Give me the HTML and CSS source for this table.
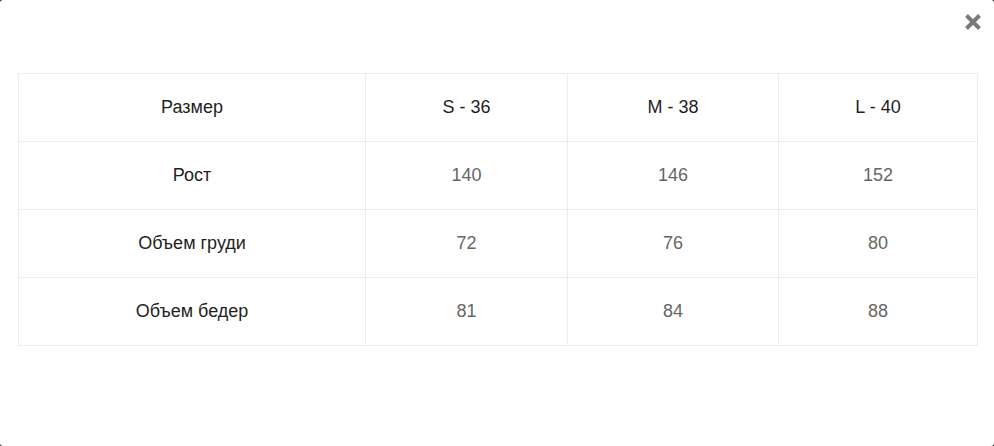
FILE: index.html
```html
<!DOCTYPE html>
<html lang="ru">
<head>
<meta charset="utf-8">
<title>Размерная сетка</title>
<link rel="stylesheet" href="styles.css">
</head>
<body>
<div class="modal">
  <button class="close" aria-label="Закрыть">
    <svg width="18" height="18" viewBox="0 0 18 18"><path d="M2.5 2.5 L15.5 15.5 M15.5 2.5 L2.5 15.5" stroke="#7a7a7a" stroke-width="4" stroke-linecap="butt"/></svg>
  </button>
  <table class="sizes">
    <colgroup>
      <col class="c1"><col class="c2"><col class="c3"><col class="c4">
    </colgroup>
    <tr class="head"><td>Размер</td><td>S - 36</td><td>M - 38</td><td>L - 40</td></tr>
    <tr><td>Рост</td><td class="num">140</td><td class="num">146</td><td class="num">152</td></tr>
    <tr><td>Объем груди</td><td class="num">72</td><td class="num">76</td><td class="num">80</td></tr>
    <tr><td>Объем бедер</td><td class="num">81</td><td class="num">84</td><td class="num">88</td></tr>
  </table>
</div>
</body>
</html>
```
FILE: styles.css
```css
html, body {
  margin: 0;
  padding: 0;
  height: 100%;
  background: #2b2b2b;
}
.modal {
  position: relative;
  box-sizing: border-box;
  height: 446px;
  background: #fff;
  border-radius: 3px;
  padding: 73px 16px 0 18px;
  font-family: "Liberation Sans", Arial, sans-serif;
}
.close {
  position: absolute;
  top: 13px;
  right: 12px;
  width: 18px;
  height: 18px;
  padding: 0;
  border: 0;
  background: none;
  display: block;
}
.close svg { display: block; }
.sizes {
  width: 959px;
  border-collapse: collapse;
  table-layout: fixed;
}
.c1 { width: 347px; }
.c2 { width: 202px; }
.c3 { width: 211px; }
.c4 { width: 199px; }
.sizes td {
  height: 67px;
  padding: 0;
  border: 1px solid #ececec;
  text-align: center;
  vertical-align: middle;
  font-size: 18px;
  color: #1f1f1f;
}
.sizes td.num {
  color: #666;
}
```
